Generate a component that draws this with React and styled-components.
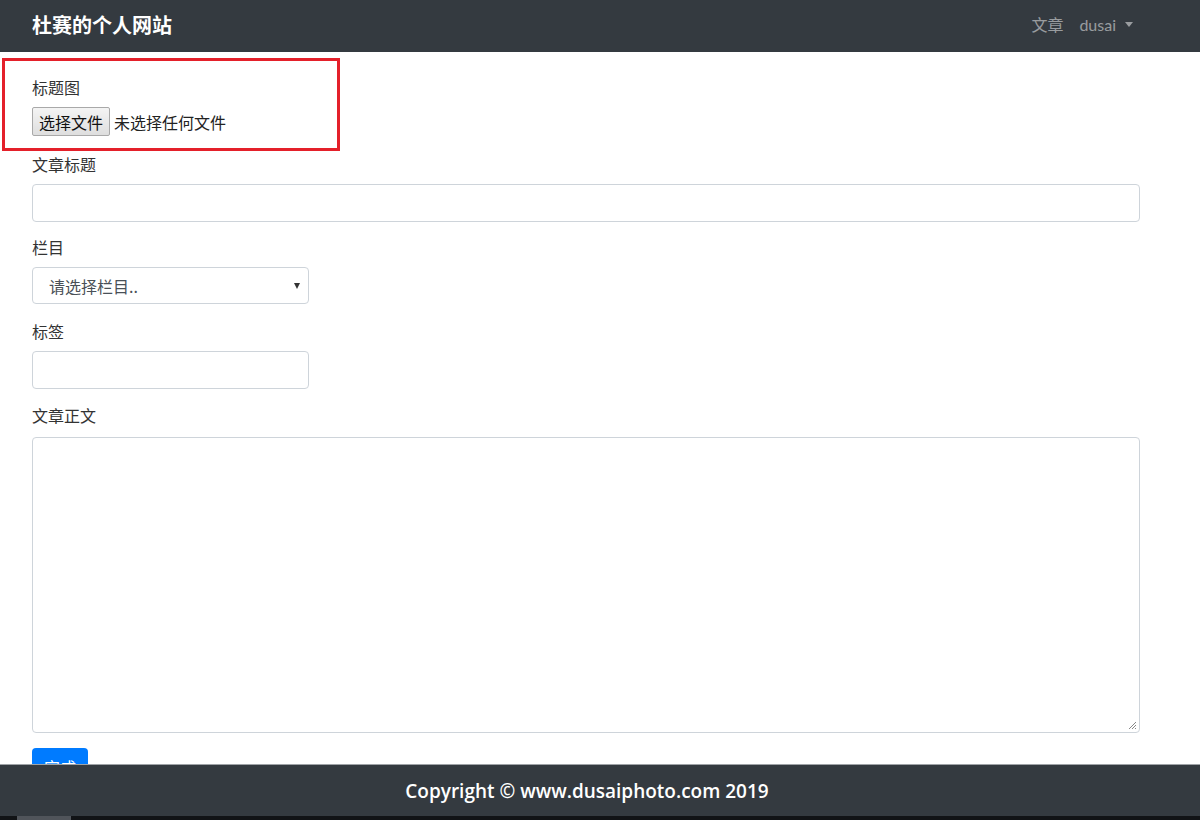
import React from "react";
import styled, { createGlobalStyle } from "styled-components";

const GlobalStyle = createGlobalStyle`
  html, body {
    margin: 0;
    padding: 0;
    background: #fff;
    font-family: "Noto Sans CJK SC", "Noto Sans", sans-serif;
    color: #212529;
  }
`;

const Page = styled.div`
  position: relative;
  display: flex;
  flex-direction: column;
  height: 820px;
  overflow: hidden;
`;

const Navbar = styled.nav`
  flex: 0 0 52px;
  display: flex;
  align-items: center;
  justify-content: space-between;
  padding: 0 67px 4px 32px;
  box-sizing: border-box;
  background: #343a40;
`;

const Brand = styled.div`
  color: #fff;
  font-size: 20px;
  font-weight: 700;
`;

const NavLinks = styled.div`
  display: flex;
  align-items: center;
  gap: 16px;
`;

const NavLink = styled.span`
  display: flex;
  align-items: center;
  gap: 9px;
  color: rgba(255, 255, 255, 0.5);
  font-size: 16px;
  font-family: ${(p) => (p.latin ? '"Lato", "Noto Sans", sans-serif' : "inherit")};
`;

const Caret = styled.span`
  width: 0;
  height: 0;
  border-left: 4.5px solid transparent;
  border-right: 4.5px solid transparent;
  border-top: 5px solid rgba(255, 255, 255, 0.5);
`;

const Content = styled.main`
  flex: 1;
  overflow: hidden;
  padding: 23px 60px 0 32px;
`;

const Group = styled.div`
  margin-bottom: ${(p) => p.gap || 15}px;
`;

const Label = styled.label`
  display: block;
  font-size: 16px;
  line-height: 24px;
  margin-bottom: ${(p) => p.gap || 8}px;
  color: #333;
`;

const FileRow = styled.div`
  display: flex;
  align-items: center;
  gap: 4px;
  height: 29px;
  font-size: 16px;
  color: #222;
`;

const FileButton = styled.button`
  height: 29px;
  padding: 0 6px;
  font-family: inherit;
  font-size: 16px;
  color: #111;
  background: linear-gradient(#f4f4f4, #dedede);
  border: 1px solid #a9a9a9;
  border-radius: 2px;
`;

const Input = styled.input`
  display: block;
  box-sizing: border-box;
  width: ${(p) => p.w || "100%"};
  height: 38px;
  border: 1px solid #ced4da;
  border-radius: 4px;
  background: #fff;
`;

const SelectBox = styled.div`
  display: flex;
  align-items: center;
  justify-content: space-between;
  box-sizing: border-box;
  width: 277px;
  height: 37px;
  padding: 0 8px 0 16px;
  border: 1px solid #ced4da;
  border-radius: 4px;
  font-size: 16px;
  color: #495057;
`;

const SmallArrow = styled.span`
  width: 0;
  height: 0;
  border-left: 3.5px solid transparent;
  border-right: 3.5px solid transparent;
  border-top: 6px solid #333;
`;

const TextArea = styled.div`
  position: relative;
  box-sizing: border-box;
  height: 296px;
  border: 1px solid #ced4da;
  border-radius: 4px;
`;

const Grip = styled.svg`
  position: absolute;
  right: 2px;
  bottom: 2px;
`;

const SubmitButton = styled.button`
  display: block;
  height: 38px;
  padding: 0 12px;
  border: none;
  border-radius: 4px;
  background: #007bff;
  color: #fff;
  font-family: inherit;
  font-size: 16px;
  line-height: 38px;
`;

const Footer = styled.footer`
  flex: 0 0 52px;
  display: flex;
  align-items: center;
  justify-content: center;
  box-sizing: border-box;
  padding-right: 26px;
  background: #343a40;
  border-top: 1px solid #9fa3a7;
  color: #fff;
  font-family: "Open Sans", "Noto Sans", sans-serif;
  font-weight: 600;
  font-size: 19px;
`;

const BottomStrip = styled.div`
  flex: 0 0 4px;
  display: flex;
  background: #111316;
  padding-left: 17px;
`;

const StripThumb = styled.div`
  width: 54px;
  background: #50545a;
`;

const Highlight = styled.div`
  position: absolute;
  left: 2px;
  top: 58px;
  width: 338px;
  height: 93px;
  box-sizing: border-box;
  border: 3px solid #e4202a;
  pointer-events: none;
`;

export default function App() {
  return (
    <Page>
      <GlobalStyle />
      <Navbar>
        <Brand>杜赛的个人网站</Brand>
        <NavLinks>
          <NavLink>文章</NavLink>
          <NavLink latin>
            dusai <Caret />
          </NavLink>
        </NavLinks>
      </Navbar>
      <Content>
        <Group gap={16}>
          <Label>标题图</Label>
          <FileRow>
            <FileButton>选择文件</FileButton>
            <span>未选择任何文件</span>
          </FileRow>
        </Group>
        <Group gap={13}>
          <Label>文章标题</Label>
          <Input />
        </Group>
        <Group>
          <Label>栏目</Label>
          <SelectBox>
            <span>请选择栏目..</span>
            <SmallArrow />
          </SelectBox>
        </Group>
        <Group gap={14}>
          <Label>标签</Label>
          <Input w="277px" />
        </Group>
        <Group gap={15}>
          <Label gap={10}>文章正文</Label>
          <TextArea>
            <Grip width="9" height="9" viewBox="0 0 9 9">
              <path d="M8 1 L1 8 M8 4 L4 8 M8 7 L7 8" stroke="#888" strokeWidth="1" />
            </Grip>
          </TextArea>
        </Group>
        <SubmitButton>完成</SubmitButton>
      </Content>
      <Footer>Copyright © www.dusaiphoto.com 2019</Footer>
      <BottomStrip>
        <StripThumb />
      </BottomStrip>
      <Highlight />
    </Page>
  );
}
